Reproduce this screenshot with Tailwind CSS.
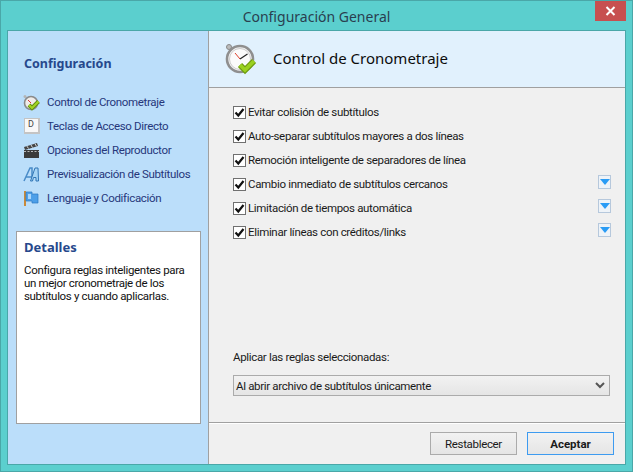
<!DOCTYPE html>
<html>
<head>
<meta charset="utf-8">
<script src="https://cdn.jsdelivr.net/npm/@tailwindcss/browser@4"></script>
</head>
<body class="m-0 overflow-hidden bg-[#5cd0ce]">
<div class="w-[633px] h-[472px] flex flex-col bg-[#5bcfce] border border-[#4aa7a8] font-['Roboto',sans-serif] text-[11.5px] tracking-[-0.33px] text-[#1a1a1a] relative">
  <div class="h-[29px] shrink-0 flex items-center justify-center font-['Noto_Sans',sans-serif] tracking-normal text-[14px] text-[#2a3f50] pt-[1px]">Configuración General</div>
  <button class="absolute top-0 right-[6px] w-[31px] h-[20px] bg-[#c75050] flex items-center justify-center">
    <svg width="11" height="10" viewBox="0 0 11 10"><path d="M1.5 1 L9.5 9 M9.5 1 L1.5 9" stroke="#fff" stroke-width="2"/></svg>
  </button>
  <div class="mx-[6px] h-[435px] flex border border-[#4aa7a8] bg-[#f0f0f0]">
    <aside class="w-[201px] shrink-0 bg-[#bbdefa] border-r border-[#a0a0a0] flex flex-col">
      <h2 class="mt-[23px] ml-[16px] h-[20px] font-['Noto_Sans',sans-serif] tracking-normal text-[12.5px] font-bold text-[#26488c] leading-[20px]">Configuración</h2>
      <nav class="mt-[16px] flex flex-col text-[#26377a]">
        <div class="h-[24px] flex items-center pl-[15px] gap-[7px]">
          <svg class="w-[17px] h-[17px]" viewBox="0 0 17 17"><circle cx="2" cy="2.5" r="1.5" fill="#b5b5b5"/><circle cx="8" cy="9" r="6.5" fill="#f0ece8" stroke="#8a8a8a" stroke-width="1.6"/><path d="M8 9 L5 6" stroke="#d33"/><path d="M6 11 L9 14 L15.5 7.5" fill="none" stroke="#5f8c10" stroke-width="4"/><path d="M6 11 L9 14 L15.5 7.5" fill="none" stroke="#a2d524" stroke-width="2.2"/></svg>
          <span class="mt-[2px]">Control de Cronometraje</span>
        </div>
        <div class="h-[24px] flex items-center pl-[15px] gap-[7px]">
          <div class="w-[16px] h-[16px] ml-[1px] bg-[#f8f8f8] border border-[#c4c4c4] border-b-2 border-r-2 text-[9px] leading-[11px] text-[#444] pl-[3px]">D</div>
          <span class="mt-[2px]">Teclas de Acceso Directo</span>
        </div>
        <div class="h-[24px] flex items-center pl-[15px] gap-[7px]">
          <svg class="w-[17px] h-[17px]" viewBox="0 0 17 17"><path d="M1 5 L14 1 L15 4 L2 8Z" fill="#444"/><path d="M4 4.2 L5.5 6.5 M8 3 L9.5 5.5 M12 1.8 L13.5 4.3" stroke="#ddd"/><rect x="1" y="8" width="15" height="8" fill="#3b3b3b"/><path d="M1 9.5 H16" stroke="#bbb" stroke-dasharray="2 1.5"/></svg>
          <span class="mt-[2px]">Opciones del Reproductor</span>
        </div>
        <div class="h-[24px] flex items-center pl-[15px] gap-[7px]">
          <svg class="w-[17px] h-[17px]" viewBox="0 0 17 17"><path d="M1 15 L7 2 H9 V15 M3 11 H9" fill="none" stroke="#4a8cc8" stroke-width="1.5"/><path d="M7.5 15 L12 2 H15 L15.5 15 H13 V11.5 H10.5 L9.5 15Z" fill="#a6d4f5" stroke="#2f75b5"/></svg>
          <span class="mt-[2px]">Previsualización de Subtítulos</span>
        </div>
        <div class="h-[24px] flex items-center pl-[15px] gap-[7px]">
          <svg class="w-[17px] h-[17px]" viewBox="0 0 17 17"><rect x="1" y="1" width="2" height="15" fill="#c8893a"/><path d="M3 2 H9 V4 H15 V13 H9 V11 H3Z" fill="#4d9fe8" stroke="#2b78c2" stroke-width=".7"/><path d="M5 4 H8 V9 H5Z" fill="#a9d6fb"/></svg>
          <span class="mt-[2px]">Lenguaje y Codificación</span>
        </div>
      </nav>
      <div class="mt-[21px] ml-[8px] w-[185px] h-[193px] bg-white border border-[#a0a0a0] px-[7px] pt-[6px]">
        <h3 class="font-['Noto_Sans',sans-serif] tracking-normal text-[13px] font-bold text-[#26488c] h-[18px] leading-[18px]">Detalles</h3>
        <p class="mt-[8px] leading-[13px] text-[#111] whitespace-nowrap">Configura reglas inteligentes para<br>un mejor cronometraje de los<br>subtítulos y cuando aplicarlas.</p>
      </div>
    </aside>
    <main class="flex-1 flex flex-col min-w-0">
      <header class="h-[57px] shrink-0 bg-[#e1f1fd] border-b border-[#a0a0a0] flex items-center pl-[16px] gap-[16px]">
        <svg class="w-[32px] h-[32px]" viewBox="0 0 32 32"><circle cx="4" cy="4" r="2.5" fill="#bbb" stroke="#888"/><circle cx="15" cy="16" r="13" fill="#f4f4f4" stroke="#8f8f8f" stroke-width="2.6"/><circle cx="15" cy="16" r="10.5" fill="#fbfbfb" stroke="#ccc"/><path d="M15 16 L10 10" stroke="#e0402a" stroke-width="1"/><path d="M15 16 L22.5 11" stroke="#222" stroke-width="1.2"/><path d="M15 22 L20 27 L29 18" fill="none" stroke="#6f9c10" stroke-width="6"/><path d="M15 22 L20 27 L29 18" fill="none" stroke="#9ad11f" stroke-width="3.5"/></svg>
        <span class="font-['Noto_Sans',sans-serif] tracking-normal text-[15px] text-[#0c0c0c] -mt-[2px]">Control de Cronometraje</span>
      </header>
      <section class="flex-1 flex flex-col relative pl-[24px] pr-[14px] pt-[12px] border-b border-[#a0a0a0] shadow-[0_1px_0_#fff]">
        <label class="h-[24px] pt-[2px] flex items-center gap-[2px]"><span class="-mt-[2px] w-[13px] h-[13px] border border-[#707070] bg-white flex items-center justify-center"><svg width="11" height="11" viewBox="0 0 11 11"><path d="M1.5 5.5 L4.3 8.5 L9.5 2" fill="none" stroke="#111" stroke-width="2.2"/></svg></span>Evitar colisión de subtítulos</label>
        <label class="h-[24px] pt-[2px] flex items-center gap-[2px]"><span class="-mt-[2px] w-[13px] h-[13px] border border-[#707070] bg-white flex items-center justify-center"><svg width="11" height="11" viewBox="0 0 11 11"><path d="M1.5 5.5 L4.3 8.5 L9.5 2" fill="none" stroke="#111" stroke-width="2.2"/></svg></span>Auto-separar subtítulos mayores a dos líneas</label>
        <label class="h-[24px] pt-[2px] flex items-center gap-[2px]"><span class="-mt-[2px] w-[13px] h-[13px] border border-[#707070] bg-white flex items-center justify-center"><svg width="11" height="11" viewBox="0 0 11 11"><path d="M1.5 5.5 L4.3 8.5 L9.5 2" fill="none" stroke="#111" stroke-width="2.2"/></svg></span>Remoción inteligente de separadores de línea</label>
        <label class="h-[24px] pt-[2px] flex items-center gap-[2px]"><span class="-mt-[2px] w-[13px] h-[13px] border border-[#707070] bg-white flex items-center justify-center"><svg width="11" height="11" viewBox="0 0 11 11"><path d="M1.5 5.5 L4.3 8.5 L9.5 2" fill="none" stroke="#111" stroke-width="2.2"/></svg></span><span class="flex-1">Cambio inmediato de subtítulos cercanos</span><span class="-mt-[6px] w-[13px] h-[14px] border border-[#b6c8dc] bg-[#eef3f8] flex items-center justify-center"><svg width="10" height="6" viewBox="0 0 10 6"><path d="M0 0 H10 L5 6Z" fill="#2a9cf5"/></svg></span></label>
        <label class="h-[24px] pt-[2px] flex items-center gap-[2px]"><span class="-mt-[2px] w-[13px] h-[13px] border border-[#707070] bg-white flex items-center justify-center"><svg width="11" height="11" viewBox="0 0 11 11"><path d="M1.5 5.5 L4.3 8.5 L9.5 2" fill="none" stroke="#111" stroke-width="2.2"/></svg></span><span class="flex-1">Limitación de tiempos automática</span><span class="-mt-[6px] w-[13px] h-[14px] border border-[#b6c8dc] bg-[#eef3f8] flex items-center justify-center"><svg width="10" height="6" viewBox="0 0 10 6"><path d="M0 0 H10 L5 6Z" fill="#2a9cf5"/></svg></span></label>
        <label class="h-[24px] pt-[2px] flex items-center gap-[2px]"><span class="-mt-[2px] w-[13px] h-[13px] border border-[#707070] bg-white flex items-center justify-center"><svg width="11" height="11" viewBox="0 0 11 11"><path d="M1.5 5.5 L4.3 8.5 L9.5 2" fill="none" stroke="#111" stroke-width="2.2"/></svg></span><span class="flex-1">Eliminar líneas con créditos/links</span><span class="-mt-[6px] w-[13px] h-[14px] border border-[#b6c8dc] bg-[#eef3f8] flex items-center justify-center"><svg width="10" height="6" viewBox="0 0 10 6"><path d="M0 0 H10 L5 6Z" fill="#2a9cf5"/></svg></span></label>
        <div class="mt-auto mb-[10px] leading-[16px]">Aplicar las reglas seleccionadas:</div>
        <div class="mb-[26px] w-[377px] h-[21px] border border-[#ababab] bg-gradient-to-b from-[#f2f2f2] to-[#e5e5e5] flex items-center justify-between pl-[2px] pr-[4px]">
          <span class="mt-[2px]">Al abrir archivo de subtítulos únicamente</span>
          <svg width="10" height="7" viewBox="0 0 10 7"><path d="M1 1 L5 5 L9 1" fill="none" stroke="#555" stroke-width="2"/></svg>
        </div>
      </section>
      <footer class="h-[41px] shrink-0 flex items-start justify-end gap-[10px] pt-[9px] pr-[11px]">
        <button class="w-[87px] h-[23px] pt-[2px] border border-[#ababab] bg-gradient-to-b from-[#f2f2f2] to-[#e5e5e5]">Restablecer</button>
        <button class="w-[87px] h-[23px] pt-[2px] border border-[#3d9bf0] bg-gradient-to-b from-[#f2f2f2] to-[#e5e5e5] font-bold tracking-normal">Aceptar</button>
      </footer>
    </main>
  </div>
</div>
</body>
</html>
